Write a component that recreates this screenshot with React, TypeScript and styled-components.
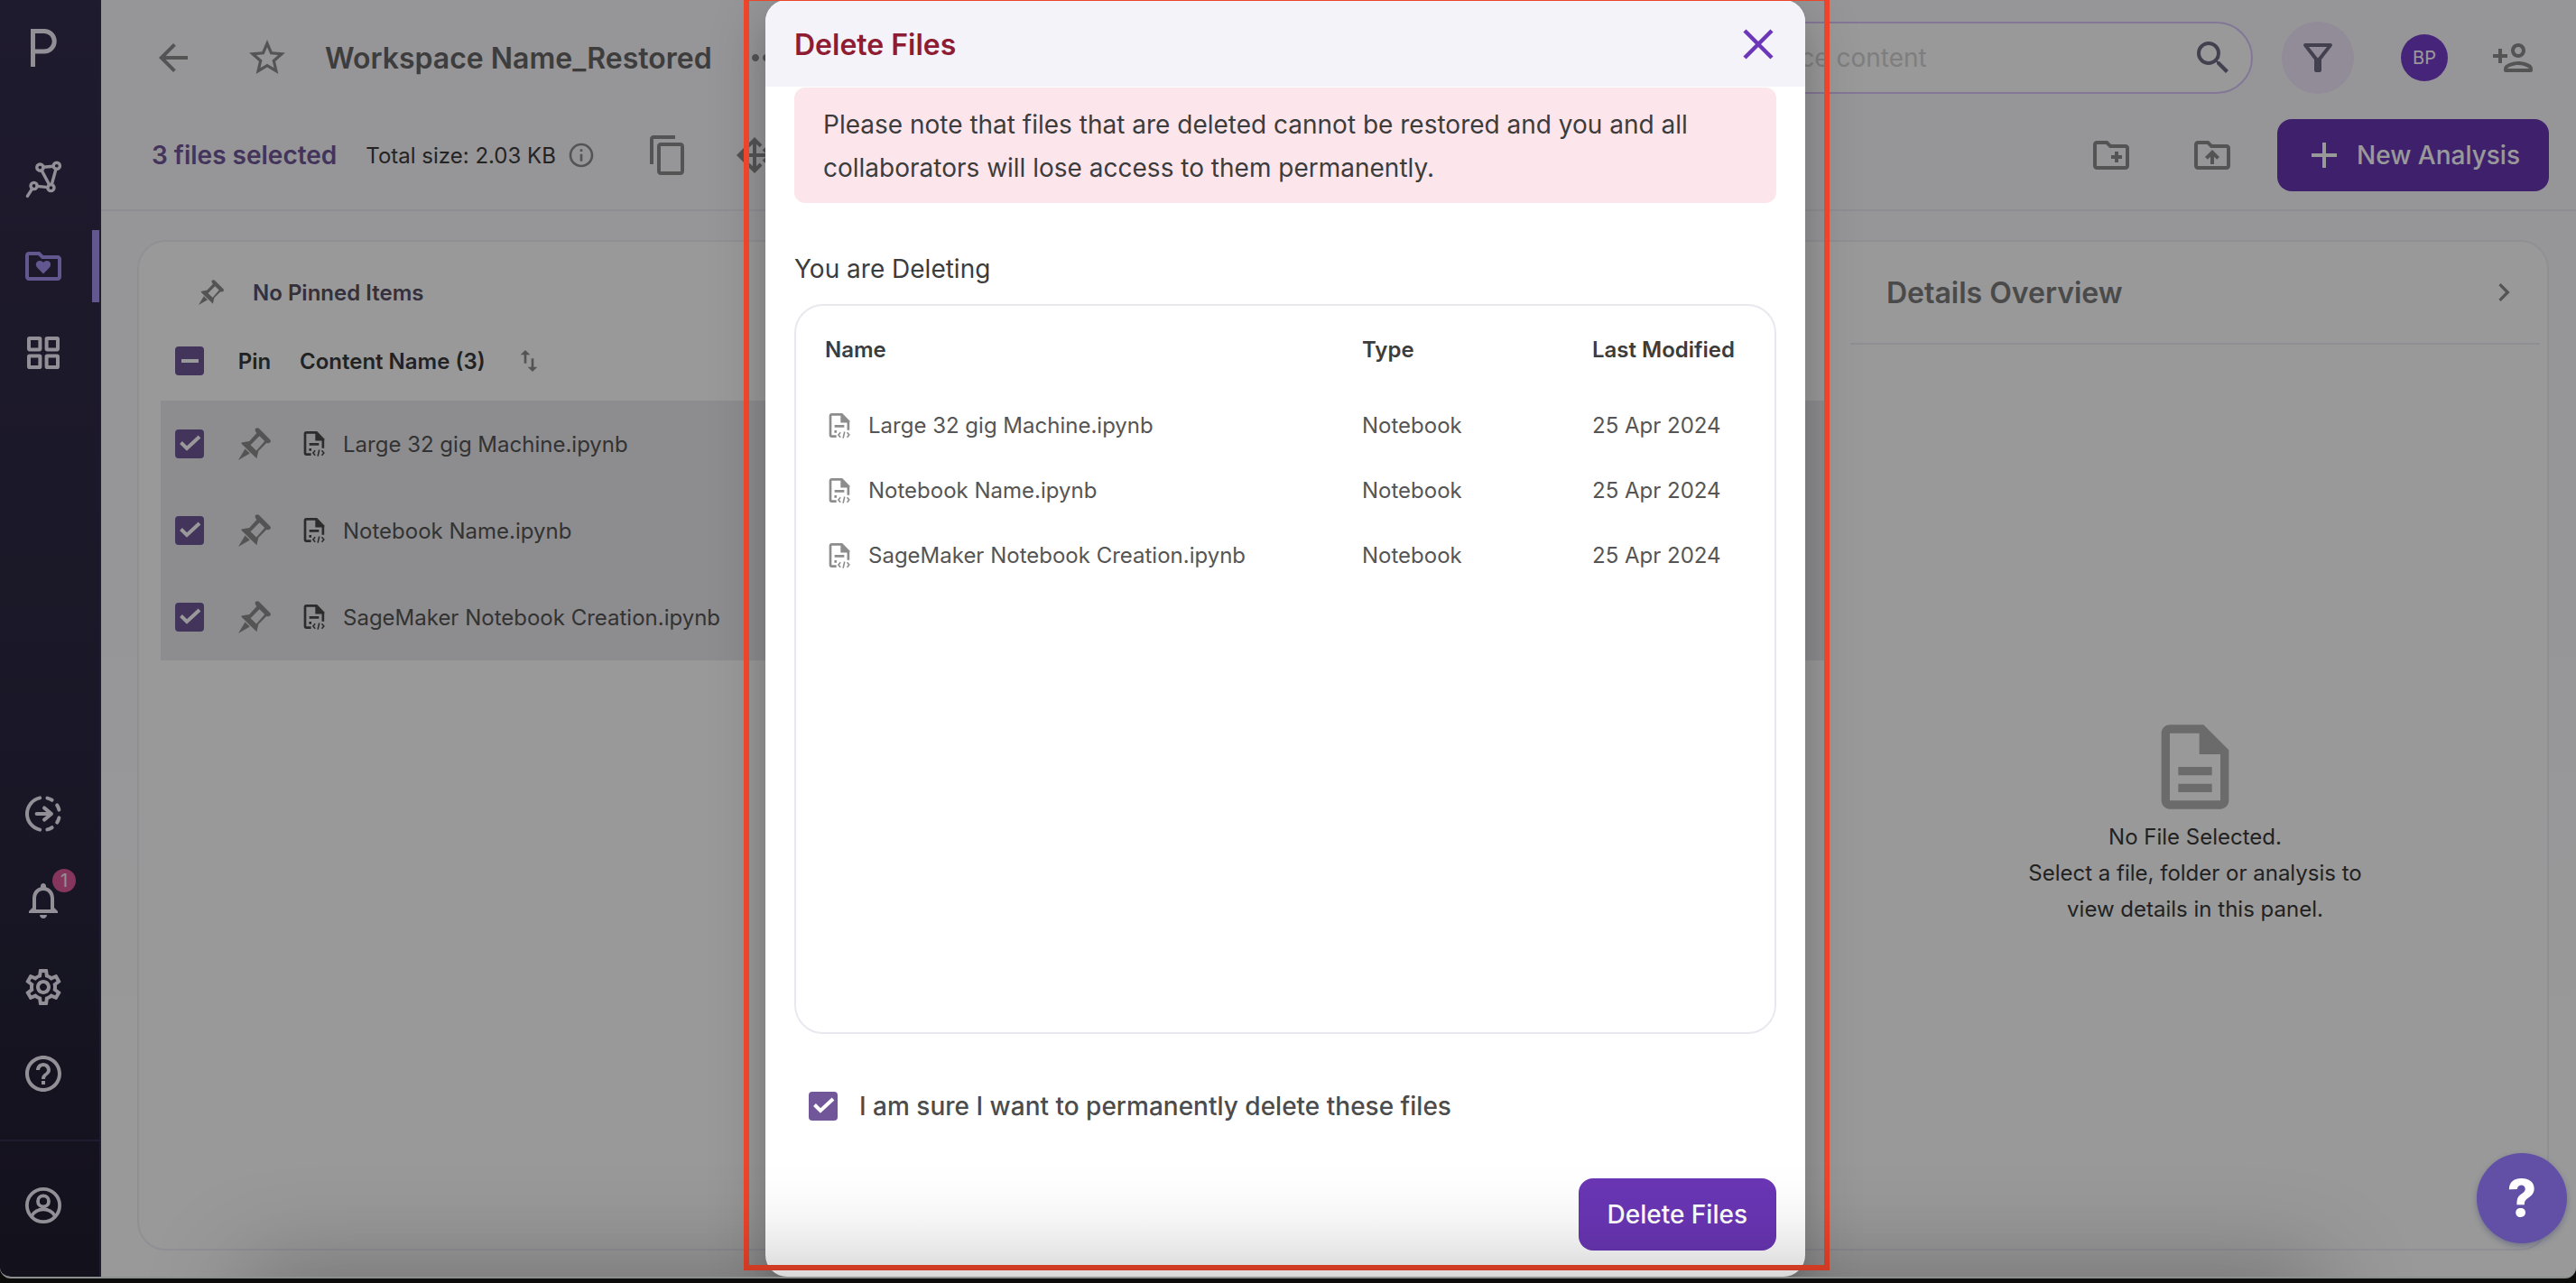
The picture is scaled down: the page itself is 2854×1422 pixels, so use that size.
import React from "react";
import styled, { createGlobalStyle } from "styled-components";
import {
  MdArrowBack,
  MdStarBorder,
  MdMoreHoriz,
  MdSearch,
  MdOutlineFilterAlt,
  MdContentCopy,
  MdOutlineInfo,
  MdNotificationsNone,
  MdOutlineSettings,
  MdHelpOutline,
  MdChevronRight,
  MdImportExport,
} from "react-icons/md";

const GlobalStyle = createGlobalStyle`
  * { box-sizing: border-box; }
  html, body { margin: 0; background: #000; }
  body {
    font-family: Inter, "Liberation Sans", sans-serif;
    font-optical-sizing: none;
    color: #3c3c3c;
  }
  button, input { font: inherit; color: inherit; }
  svg { display: block; flex: none; }
`;

/* ---------- icons ---------- */

const Svg = styled.svg<{ $size: number }>`
  width: ${(p) => p.$size}px;
  height: ${(p) => p.$size}px;
`;

const Logo = () => (
  <svg width="32" height="44" viewBox="0 0 32 44" fill="none" stroke="currentColor" strokeWidth="5" aria-hidden="true">
    <path d="M4.5 43V3.5H17a10 10 0 0 1 0 22.500H4.500" />
  </svg>
);

const GraphIcon = () => (
  <Svg $size={48} viewBox="0 0 24 24" fill="none" stroke="currentColor" strokeWidth="1.700" strokeLinecap="round">
    <circle cx="10.200" cy="5.300" r="1.800" />
    <circle cx="19.400" cy="4.400" r="1.800" />
    <circle cx="16.200" cy="16.500" r="1.800" />
    <circle cx="6.800" cy="15.500" r="1.800" />
    <path d="M11.900 5.100l5.800-.5M11 6.800l4.400 8.200M19 6.100l-2.400 8.800M8.500 15.700l6 .6M5.900 17l-2.700 4.200" />
  </Svg>
);

const FOLDER =
  "M20 6h-8l-2-2H4c-1.100 0-2 .9-2 2v12c0 1.100.9 2 2 2h16c1.100 0 2-.9 2-2V8c0-1.100-.9-2-2-2zm0 12H4V6h5.170l2 2H20v10z";

const FolderHeartIcon = () => (
  <Svg $size={48} viewBox="0 0 24 24" fill="currentColor">
    <path d={FOLDER} />
    <path d="M12 16.200l-3.300-3.300C7.200 11.400 8 9 10 9c.9 0 1.600.4 2 1 .4-.6 1.100-1 2-1 2 0 2.800 2.400 1.300 3.900z" />
  </Svg>
);

const FolderPlusIcon = () => (
  <Svg $size={48} viewBox="0 0 24 24" fill="currentColor">
    <path d={FOLDER} />
    <path d="M12 12h2v-2h2v2h2v2h-2v2h-2v-2h-2z" />
  </Svg>
);

const FolderUpIcon = () => (
  <Svg $size={48} viewBox="0 0 24 24" fill="currentColor">
    <path d={FOLDER} />
    <path d="M9.410 14.420L11 12.840V17h2v-4.160l1.590 1.590L16 13.010 12.010 9 8 13.010z" />
  </Svg>
);

const GridIcon = () => (
  <Svg $size={48} viewBox="0 0 24 24" fill="none" stroke="currentColor" strokeWidth="2">
    <rect x="4" y="4" width="6.200" height="6.200" rx=".4" />
    <rect x="13.800" y="4" width="6.200" height="6.200" rx=".4" />
    <rect x="4" y="13.800" width="6.200" height="6.200" rx=".4" />
    <rect x="13.800" y="13.800" width="6.200" height="6.200" rx=".4" />
  </Svg>
);

const TransferIcon = () => (
  <Svg $size={48} viewBox="0 0 24 24" fill="none" stroke="currentColor" strokeWidth="2" strokeLinecap="round" strokeLinejoin="round">
    <path d="M10.100 3.200a9 9 0 0 0 0 17.600M14.200 3.300a9 9 0 0 1 2.600 1.100M19.600 7.200a9 9 0 0 1 1.100 2.600M20.700 14.200a9 9 0 0 1-1.100 2.600M16.800 19.600a9 9 0 0 1-2.600 1.100" />
    <path d="M8.300 12h8M12.500 8.700l4 3.300-4 3.300" />
  </Svg>
);

const UserIcon = () => (
  <Svg $size={48} viewBox="0 0 24 24" fill="none" stroke="currentColor" strokeWidth="1.900">
    <circle cx="12" cy="12" r="9.050" />
    <circle cx="12" cy="9.700" r="3" />
    <path d="M5.400 18a7.600 7.600 0 0 1 13.200 0" />
  </Svg>
);

const MoveIcon = () => (
  <Svg $size={48} viewBox="0 -960 960 960" fill="currentColor">
    <path d="M480-80 310-250l57-57 73 73v-206H235l73 72-58 58L80-480l169-169 57 57-72 72h206v-206l-73 73-57-57 170-170 170 170-57 57-73-73v206h205l-73-72 58-58 170 170-170 170-57-57 73-73H520v205l72-73 58 58L480-80Z" />
  </Svg>
);

const PersonAddIcon = () => (
  <Svg $size={48} viewBox="0 0 24 24" fill="currentColor">
    <path d="M15 12c2.210 0 4-1.790 4-4s-1.790-4-4-4-4 1.790-4 4 1.790 4 4 4zm0-6c1.100 0 2 .9 2 2s-.9 2-2 2-2-.9-2-2 .9-2 2-2zm0 8c-2.670 0-8 1.340-8 4v1c0 .55.45 1 1 1h14c.55 0 1-.45 1-1v-1c0-2.660-5.330-4-8-4zm-6 4c.22-.72 3.310-2 6-2 2.700 0 5.800 1.290 6 2H9zm-3-3v-3h3v-2H6V7H4v3H1v2h3v3z" />
  </Svg>
);

const PlusIcon = () => (
  <Svg $size={48} viewBox="0 0 24 24" fill="currentColor">
    <path d="M19 13h-6v6h-2v-6H5v-2h6V5h2v6h6z" />
  </Svg>
);

const PinIcon = ({ size }: { size: number }) => (
  <Svg $size={size} viewBox="0 0 106 106" fill="currentColor">
    <path
      fillRule="evenodd"
      d="M56 3q6-5 12 0l35 35q5 6 1 10-5 5-12 2L66 76l-6 25-49-48q-3-4 3-5l22-4 24-26q-8-9-4-15zM69 27L40 57l10 9 9 9 27-31z"
    />
    <path d="M22 69l16 15L0 106z" />
  </Svg>
);

const FileIcon = () => (
  <Svg $size={32} viewBox="0 0 24 24" fill="none" stroke="currentColor" strokeWidth="2">
    <path d="M9.500 20.700H5.700a1.200 1.200 0 0 1-1.200-1.200V3.700a1.200 1.200 0 0 1 1.200-1.200H14M19.400 8v7.500" />
    <path d="M13 1.500h1.400l6 6.200v1.700H13z" fill="currentColor" stroke="none" />
    <path d="M8 12.300h8M7.800 16.800h2" />
    <path d="M12.900 17.500l-1.700 2 1.700 2M18.400 17.500l1.700 2-1.700 2M16.300 16.900l-1.200 5.300" strokeWidth="1.200" />
  </Svg>
);

const CloseIcon = () => (
  <Svg $size={48} viewBox="0 0 48 48" fill="none" stroke="currentColor" strokeWidth="4.500">
    <path d="M9 9l30 30M39 9L9 39" />
  </Svg>
);

const DocumentIcon = () => (
  <Svg $size={112} viewBox="0 0 24 24" fill="currentColor">
    <path d="M8 16h8v2H8zm0-4h8v2H8zm6-10H6c-1.100 0-2 .9-2 2v16c0 1.100.89 2 1.990 2H18c1.100 0 2-.9 2-2V8l-6-6zm4 18H6V4h7v5h5v11z" />
  </Svg>
);

/* ---------- shell ---------- */

const Screen = styled.div`
  position: relative;
  height: 100vh;
  padding-bottom: 5px;
  overflow: hidden;
  background: #0b0c0a;
`;

const Window = styled.div`
  position: relative;
  display: flex;
  height: 100%;
  overflow: hidden;
  border-bottom: 2px solid #8b8e8e;
  border-radius: 0 0 12px 12px;
  background: linear-gradient(#faf8fd, #fbfaff 50%, #ffffff 80%);
`;

const IconButton = styled.button`
  display: flex;
  padding: 0;
  border: 0;
  background: none;
  color: #8d8d8d;
`;

const Sidebar = styled.nav`
  display: flex;
  flex: none;
  flex-direction: column;
  width: 112px;
  border-right: 2px solid #352f52;
  background: linear-gradient(#342d4d, #2b2741 60%, #201d2f);
  color: #f3eefb;
`;

const LogoArea = styled.div`
  height: 159px;
  padding: 31px 0 0 32px;
`;

const NavGroup = styled.div`
  display: flex;
  flex-direction: column;
  gap: 16px;
`;

const NavItem = styled.button<{ $active?: boolean }>`
  display: flex;
  align-items: center;
  width: 100%;
  height: 80px;
  padding: 0 0 0 24px;
  border: 0;
  border-right: 8px solid ${(p) => (p.$active ? "#a493ee" : "transparent")};
  background: none;
  color: ${(p) => (p.$active ? "#a493ee" : "inherit")};
`;

const BadgeHolder = styled.span`
  position: relative;
`;

const Badge = styled.span`
  position: absolute;
  top: -11px;
  right: -12px;
  width: 26px;
  height: 26px;
  border-radius: 50%;
  background: #df5a9c;
  font-size: 20px;
  line-height: 26px;
  text-align: center;
`;

const NavSpacer = styled.div`
  flex: 1;
`;

const NavFooter = styled.div`
  display: flex;
  align-items: center;
  height: 152px;
  margin-top: 33px;
  padding-bottom: 8px;
  border-top: 2px solid #352f52;
`;

const Main = styled.main`
  display: flex;
  flex: 1;
  flex-direction: column;
  min-width: 0;
`;

const TopBar = styled.header`
  display: flex;
  align-items: center;
  height: 128px;
  padding: 0 46px 0 56px;
`;

const StarButton = styled(IconButton)`
  margin: 0 40px 0 56px;
`;

const PageTitle = styled.h1`
  margin: 0 36px 0 0;
  color: #666;
  font-size: 32px;
  font-weight: 600;
  white-space: nowrap;
`;

const SearchField = styled.label`
  display: flex;
  align-items: center;
  width: 748px;
  height: 80px;
  margin: 0 32px 0 auto;
  padding: 0 18px 0 30px;
  border: 2px solid #d9c7fb;
  border-radius: 40px;
  background: #fff;
  color: #716b84;
`;

const SearchInput = styled.input`
  flex: 1;
  min-width: 0;
  padding: 0;
  border: 0;
  outline: 0;
  background: none;
  font-size: 28px;
  &::placeholder {
    color: #d3d3d3;
    opacity: 1;
  }
`;

const FilterButton = styled.button`
  display: flex;
  align-items: center;
  justify-content: center;
  width: 80px;
  height: 80px;
  padding: 0;
  border: 0;
  border-radius: 50%;
  background: #f3e8fd;
  color: #716b84;
`;

const Avatar = styled.button`
  width: 52px;
  height: 52px;
  margin: 0 48px 0 52px;
  padding: 0;
  border: 0;
  border-radius: 50%;
  background: #763ccb;
  color: #fff;
  font-size: 20px;
`;

const ActionBar = styled.div`
  display: flex;
  align-items: center;
  padding: 4px 30px 20px 56px;
  border-bottom: 2px solid #efedf6;
`;

const SelectedCount = styled.strong`
  margin-right: 32px;
  color: #715799;
  font-size: 28px;
  font-weight: 600;
`;

const TotalSize = styled.span`
  display: flex;
  align-items: center;
  gap: 12px;
  margin-right: 56px;
  font-size: 24px;
  svg {
    color: #8d8d8d;
  }
`;

const Actions = styled.div<{ $gap: number; $end?: boolean }>`
  display: flex;
  gap: ${(p) => p.$gap}px;
  margin: ${(p) => (p.$end ? "0 48px 0 auto" : "0")};
`;

const PrimaryButton = styled.button<{ $icon?: boolean }>`
  display: flex;
  align-items: center;
  gap: 12px;
  height: 80px;
  padding: ${(p) => (p.$icon ? "0 32px 0 28px" : "0 32px")};
  border: 0;
  border-radius: 16px;
  background: #6a36b5;
  color: #fff;
  font-size: 28px;
  font-weight: 500;
  white-space: nowrap;
`;

/* ---------- content card ---------- */

const Body = styled.div`
  display: flex;
  flex: 1;
  min-height: 0;
  padding: 32px 30px 29px 40px;
`;

const Card = styled.div`
  display: flex;
  flex: 1;
  min-width: 0;
  border: 2px solid #f0eef7;
  border-radius: 32px;
  background: #fff;
`;

const ListPane = styled.section`
  flex: 1;
  min-width: 0;
  padding: 24px 28px 24px 24px;
`;

const PinnedNote = styled.div`
  display: flex;
  align-items: center;
  gap: 32px;
  height: 64px;
  padding-left: 42px;
  color: #575064;
  font-size: 24px;
  font-weight: 600;
  svg {
    color: #8d8d8d;
  }
`;

const FileTable = styled.table`
  width: 100%;
  border-collapse: collapse;
  table-layout: fixed;
  font-size: 24px;
  th {
    height: 88px;
    padding: 0;
    color: #393939;
    font-weight: 600;
  }
  td {
    height: 96px;
    padding: 0;
    background: #ebebf0;
    color: #555;
  }
  th:last-child,
  td:last-child {
    padding-left: 10px;
  }
`;

const FixedCol = styled.col<{ $width: number }>`
  width: ${(p) => p.$width}px;
`;

const CellInline = styled.div<{ $gap: number; $center?: boolean }>`
  display: flex;
  align-items: center;
  justify-content: ${(p) => (p.$center ? "center" : "flex-start")};
  gap: ${(p) => p.$gap}px;
  svg {
    color: #8d8d8d;
  }
`;

const DarkIcon = styled.span`
  svg {
    color: #4a4a4a;
  }
`;

const CheckBox = styled.span`
  display: inline-grid;
  flex: none;
  width: 32px;
  height: 32px;
  > * {
    grid-area: 1 / 1;
  }
  && svg {
    color: #fff;
    pointer-events: none;
  }
`;

const CheckInput = styled.input`
  width: 32px;
  height: 32px;
  margin: 0;
  border-radius: 4px;
  appearance: none;
  background: #715799;
`;

const Tick = ({ id, label, mixed }: { id: string; label?: string; mixed?: boolean }) => (
  <CheckBox>
    <CheckInput type="checkbox" id={id} defaultChecked aria-label={label} />
    <svg width="32" height="32" viewBox="0 0 32 32" fill="none" stroke="currentColor" strokeWidth="4">
      <path d={mixed ? "M7 16h19" : "M6.500 14.500l6.500 6.500L27 8"} />
    </svg>
  </CheckBox>
);

const DetailsPane = styled.aside`
  display: flex;
  flex: none;
  flex-direction: column;
  width: 764px;
  margin-right: 8px;
`;

const DetailsHeader = styled.div`
  display: flex;
  align-items: center;
  justify-content: space-between;
  height: 114px;
  padding: 0 20px 0 40px;
  border-bottom: 2px solid #efedf6;
`;

const DetailsTitle = styled.h2`
  margin: 0;
  color: #7c7c7c;
  font-size: 32px;
  font-weight: 600;
`;

const EmptyState = styled.div`
  display: flex;
  flex: 1;
  flex-direction: column;
  align-items: center;
  justify-content: center;
  padding-top: 56px;
  color: #393939;
  font-size: 24px;
  line-height: 40px;
  text-align: center;
  svg {
    color: #b3b3b3;
  }
`;

const EmptyText = styled.p`
  margin: 2px 0 0;
`;

/* ---------- dialog ---------- */

const Overlay = styled.div`
  position: absolute;
  inset: 0;
  display: flex;
  justify-content: center;
  padding-right: 6px;
  background: rgba(0, 0, 0, 0.4);
`;

const Dialog = styled.div`
  position: relative;
  display: flex;
  flex-direction: column;
  width: 1152px;
  height: 100%;
  border-radius: 24px;
  background: #fff;
  box-shadow: 0 22px 30px -14px rgba(0, 0, 0, 0.2), 0 18px 60px 6px rgba(0, 0, 0, 0.18);
`;

const DialogHeader = styled.div`
  display: flex;
  align-items: center;
  justify-content: space-between;
  height: 97px;
  padding: 2px 28px 0 32px;
  border-bottom: 1px solid #fff;
  border-radius: 24px 24px 0 0;
  background: #f5f3fa;
`;

const DialogTitle = styled.h2`
  margin: 0;
  color: #8e1c33;
  font-size: 32px;
  font-weight: 600;
`;

const CloseButton = styled(IconButton)`
  color: #6b36b7;
`;

const DialogBody = styled.div`
  display: flex;
  flex: 1;
  flex-direction: column;
  min-height: 0;
  padding: 0 32px 29px;
  color: #3c3c3c;
  font-size: 28px;
  line-height: 48px;
`;

const Alert = styled.p`
  margin: 0;
  padding: 17px 32px 15px;
  border-radius: 12px;
  background: #fce6ec;
`;

const SectionLabel = styled.p`
  margin: 49px 0 15px;
`;

const TableFrame = styled.div`
  flex: 1;
  min-height: 0;
  padding: 1px 32px 0;
  border: 2px solid #e8e8ee;
  border-radius: 32px;
`;

const DeleteTable = styled.table`
  width: 100%;
  border-collapse: collapse;
  table-layout: fixed;
  font-size: 24px;
  line-height: 32px;
  text-align: left;
  th {
    height: 96px;
    padding: 0;
    font-weight: 600;
    white-space: nowrap;
  }
  td {
    height: 72px;
    padding: 0;
    color: #555;
  }
`;

const Confirm = styled.label`
  display: flex;
  align-items: center;
  gap: 24px;
  height: 64px;
  margin: 48px 0;
  padding-left: 16px;
  color: #4c4c4c;
  font-weight: 500;
`;

const DialogFooter = styled.div`
  display: flex;
  justify-content: flex-end;
`;

const Highlight = styled.div`
  position: absolute;
  inset: -5px -27px 7px -24px;
  border: 6px solid #ee4429;
  pointer-events: none;
`;

const HelpButton = styled.button`
  position: absolute;
  right: 10px;
  bottom: 37px;
  width: 100px;
  height: 100px;
  padding: 0;
  border: 0;
  border-radius: 50%;
  background: #6250a6;
  box-shadow: 0 3px 6px rgba(40, 50, 110, 0.35);
  color: #fff;
  font-size: 56px;
  font-weight: 800;
`;

const DockShadow = styled.div`
  position: absolute;
  top: 100%;
  left: 280px;
  right: 292px;
  height: 200px;
  box-shadow: 0 0 110px 8px rgba(0, 0, 0, 0.27);
  pointer-events: none;
`;

const files = ["Large 32 gig Machine.ipynb", "Notebook Name.ipynb", "SageMaker Notebook Creation.ipynb"];

export default function App() {
  return (
    <Screen>
      <GlobalStyle />
      <Window>
        <Sidebar aria-label="Main">
          <LogoArea>
            <Logo />
          </LogoArea>
          <NavGroup>
            <NavItem aria-label="Analyses">
              <GraphIcon />
            </NavItem>
            <NavItem aria-label="Workspaces" $active>
              <FolderHeartIcon />
            </NavItem>
            <NavItem aria-label="Apps">
              <GridIcon />
            </NavItem>
          </NavGroup>
          <NavSpacer />
          <NavGroup>
            <NavItem aria-label="Transfers">
              <TransferIcon />
            </NavItem>
            <NavItem aria-label="Notifications">
              <BadgeHolder>
                <MdNotificationsNone size={48} />
                <Badge>1</Badge>
              </BadgeHolder>
            </NavItem>
            <NavItem aria-label="Settings">
              <MdOutlineSettings size={48} />
            </NavItem>
            <NavItem aria-label="Help">
              <MdHelpOutline size={48} />
            </NavItem>
          </NavGroup>
          <NavFooter>
            <NavItem aria-label="Account">
              <UserIcon />
            </NavItem>
          </NavFooter>
        </Sidebar>

        <Main>
          <TopBar>
            <IconButton aria-label="Back">
              <MdArrowBack size={48} />
            </IconButton>
            <StarButton aria-label="Favourite">
              <MdStarBorder size={48} />
            </StarButton>
            <PageTitle>Workspace Name_Restored</PageTitle>
            <IconButton aria-label="More">
              <MdMoreHoriz size={48} />
            </IconButton>
            <SearchField>
              <SearchInput type="text" placeholder="Search workspace content" aria-label="Search workspace content" />
              <MdSearch size={48} />
            </SearchField>
            <FilterButton aria-label="Filter">
              <MdOutlineFilterAlt size={48} />
            </FilterButton>
            <Avatar>BP</Avatar>
            <IconButton aria-label="Add person">
              <PersonAddIcon />
            </IconButton>
          </TopBar>
          <ActionBar>
            <SelectedCount>3 files selected</SelectedCount>
            <TotalSize>
              Total size: 2.03 KB
              <MdOutlineInfo size={32} />
            </TotalSize>
            <Actions $gap={48}>
              <IconButton aria-label="Copy">
                <MdContentCopy size={48} />
              </IconButton>
              <IconButton aria-label="Move">
                <MoveIcon />
              </IconButton>
            </Actions>
            <Actions $gap={64} $end>
              <IconButton aria-label="New folder">
                <FolderPlusIcon />
              </IconButton>
              <IconButton aria-label="Upload">
                <FolderUpIcon />
              </IconButton>
            </Actions>
            <PrimaryButton $icon>
              <PlusIcon />
              New Analysis
            </PrimaryButton>
          </ActionBar>

          <Body>
            <Card>
              <ListPane>
                <PinnedNote>
                  <PinIcon size={28} />
                  No Pinned Items
                </PinnedNote>
                <FileTable>
                  <colgroup>
                    <FixedCol $width={64} />
                    <FixedCol $width={80} />
                    <col />
                  </colgroup>
                  <thead>
                    <tr>
                      <th>
                        <CellInline $gap={0} $center>
                          <Tick id="all" label="Select all" mixed />
                        </CellInline>
                      </th>
                      <th>Pin</th>
                      <th>
                        <CellInline $gap={32}>
                          Content Name (3)
                          <MdImportExport size={32} />
                        </CellInline>
                      </th>
                    </tr>
                  </thead>
                  <tbody>
                    {files.map((name, i) => (
                      <tr key={name}>
                        <td>
                          <CellInline $gap={0} $center>
                            <Tick id={`file-${i}`} label={name} />
                          </CellInline>
                        </td>
                        <td>
                          <CellInline $gap={0} $center>
                            <PinIcon size={36} />
                          </CellInline>
                        </td>
                        <td>
                          <CellInline $gap={16}>
                            <DarkIcon>
                              <FileIcon />
                            </DarkIcon>
                            {name}
                          </CellInline>
                        </td>
                      </tr>
                    ))}
                  </tbody>
                </FileTable>
              </ListPane>
              <DetailsPane>
                <DetailsHeader>
                  <DetailsTitle>Details Overview</DetailsTitle>
                  <IconButton aria-label="Collapse">
                    <MdChevronRight size={40} />
                  </IconButton>
                </DetailsHeader>
                <EmptyState>
                  <DocumentIcon />
                  <EmptyText>
                    No File Selected.
                    <br />
                    Select a file, folder or analysis to
                    <br />
                    view details in this panel.
                  </EmptyText>
                </EmptyState>
              </DetailsPane>
            </Card>
          </Body>
        </Main>

        <Overlay>
          <Dialog role="dialog" aria-labelledby="dialog-title">
            <DialogHeader>
              <DialogTitle id="dialog-title">Delete Files</DialogTitle>
              <CloseButton aria-label="Close">
                <CloseIcon />
              </CloseButton>
            </DialogHeader>
            <DialogBody>
              <Alert>
                Please note that files that are deleted cannot be restored and you and all collaborators will lose
                access to them permanently.
              </Alert>
              <SectionLabel>You are Deleting</SectionLabel>
              <TableFrame>
                <DeleteTable>
                  <colgroup>
                    <col />
                    <FixedCol $width={255} />
                    <FixedCol $width={170} />
                  </colgroup>
                  <thead>
                    <tr>
                      <th>Name</th>
                      <th>Type</th>
                      <th>Last Modified</th>
                    </tr>
                  </thead>
                  <tbody>
                    {files.map((name) => (
                      <tr key={name}>
                        <td>
                          <CellInline $gap={16}>
                            <FileIcon />
                            {name}
                          </CellInline>
                        </td>
                        <td>Notebook</td>
                        <td>25 Apr 2024</td>
                      </tr>
                    ))}
                  </tbody>
                </DeleteTable>
              </TableFrame>
              <Confirm htmlFor="confirm">
                <Tick id="confirm" />I am sure I want to permanently delete these files
              </Confirm>
              <DialogFooter>
                <PrimaryButton>Delete Files</PrimaryButton>
              </DialogFooter>
            </DialogBody>
            <Highlight />
          </Dialog>
        </Overlay>
        <HelpButton aria-label="Help">?</HelpButton>
        <DockShadow />
      </Window>
    </Screen>
  );
}
